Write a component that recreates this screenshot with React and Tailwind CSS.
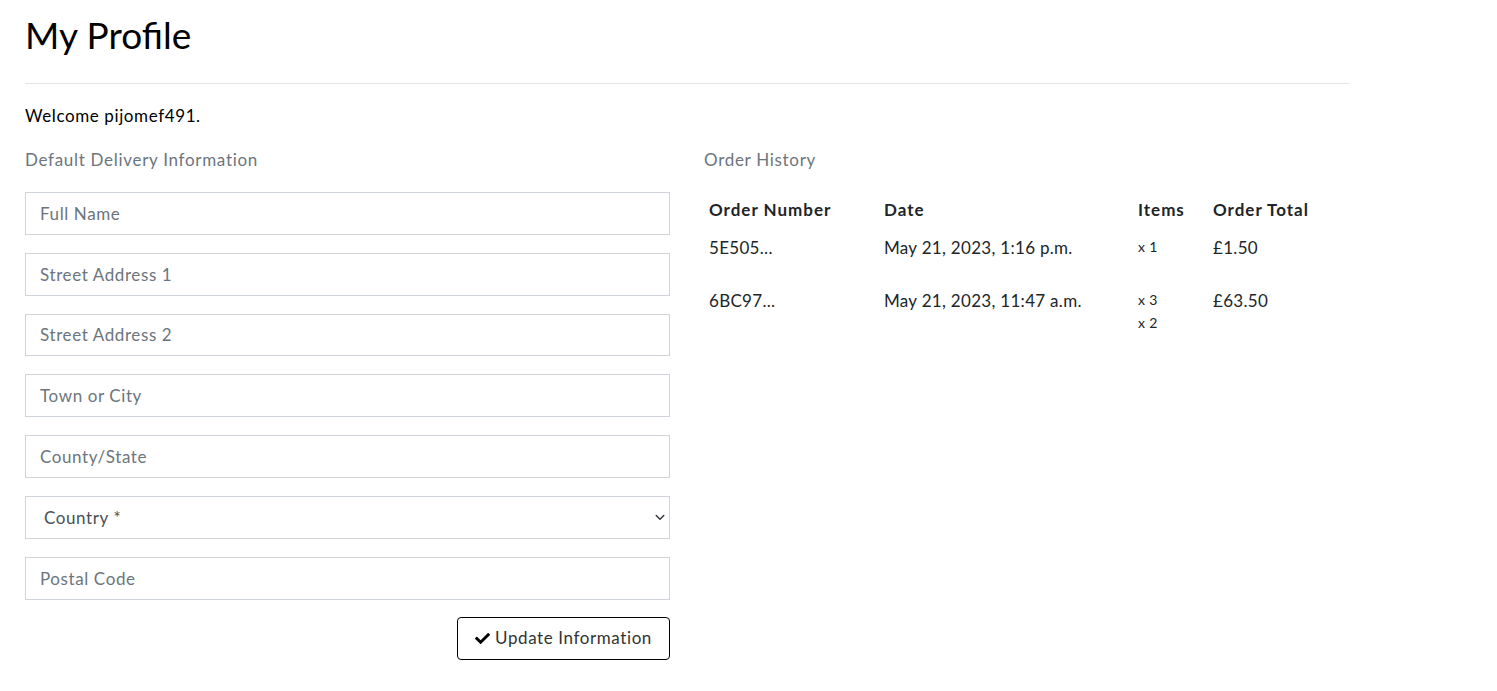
import React from "react";
import { FaCheck } from "react-icons/fa";

const fields = ["Full Name", "Street Address 1", "Street Address 2", "Town or City", "County/State"];

const orders = [
  { number: "5E505...", date: "May 21, 2023, 1:16 p.m.", items: ["x 1"], total: "£1.50" },
  { number: "6BC97...", date: "May 21, 2023, 11:47 a.m.", items: ["x 3", "x 2"], total: "£63.50" },
];

export default function App() {
  return (
    <div className="min-h-screen bg-white text-[#212529] font-['Lato','Noto_Sans',sans-serif]">
      <div className="ml-[25px] w-[1324px] pt-[13px]">
        <h1 className="text-[37px] leading-[44px] text-black">My Profile</h1>
        <hr className="mt-[26px] border-0 border-t border-[#e5e5e5]" />
        <p className="mt-[20px] text-[17px] leading-[24px] tracking-[0.6px] text-black">Welcome pijomef491.</p>

        <div className="mt-[20px] flex gap-[34px]">
          <div className="w-[645px]">
            <p className="text-[17px] leading-[24px] tracking-[0.7px] text-[#6c757d]">Default Delivery Information</p>
            <form className="mt-[20px] flex flex-col gap-[18px]">
              {fields.map((f) => (
                <input
                  key={f}
                  type="text"
                  placeholder={f}
                  className="h-[42.8px] w-full border border-[#ced4da] px-[14px] text-[17px] tracking-[0.6px] text-[#495057] placeholder:text-[#6c757d] outline-none"
                />
              ))}
              <div className="relative">
                <select className="h-[42.8px] w-full appearance-none border border-[#ced4da] bg-white pl-[18px] text-[17px] tracking-[0.6px] text-[#495057] outline-none">
                  <option>Country *</option>
                </select>
                <svg className="pointer-events-none absolute right-[4px] top-[15px] h-[12px] w-[12px]" viewBox="0 0 16 16">
                  <path d="M3 6l5 5 5-5" fill="none" stroke="#343a40" strokeWidth="2" strokeLinecap="round" strokeLinejoin="round" />
                </svg>
              </div>
              <input
                type="text"
                placeholder="Postal Code"
                className="h-[42.8px] w-full border border-[#ced4da] px-[14px] text-[17px] tracking-[0.6px] text-[#495057] placeholder:text-[#6c757d] outline-none"
              />
              <div className="flex justify-end">
                <button type="button" className="-mt-[1px] flex h-[43px] w-[213px] items-center justify-center gap-[5px] rounded-[4px] border border-black text-[17px] tracking-[0.6px] text-[#333]">
                  <FaCheck className="h-[15px] w-[15px] text-black" />
                  Update Information
                </button>
              </div>
            </form>
          </div>

          <div className="w-[645px]">
            <p className="text-[17px] leading-[24px] tracking-[0.7px] text-[#6c757d]">Order History</p>
            <div className="mt-[19px] grid grid-cols-[175px_254px_75px_1fr] text-[17px] leading-[24px] tracking-[0.3px]">
              <div className="px-[5px] py-[7px] font-bold tracking-[1px]">Order Number</div>
              <div className="px-[5px] py-[7px] font-bold tracking-[1px]">Date</div>
              <div className="px-[5px] py-[7px] font-bold tracking-[1px]">Items</div>
              <div className="px-[5px] py-[7px] font-bold tracking-[1px]">Order Total</div>
              {orders.map((o) => (
                <React.Fragment key={o.number}>
                  <div className="px-[5px] py-[7px]">{o.number}</div>
                  <div className="px-[5px] py-[7px]">{o.date}</div>
                  <div className="px-[5px] py-[7px]">
                    <ul className="-mt-[1px] mb-[17px] text-[14px] leading-[23px]">
                      {o.items.map((it, i) => (
                        <li key={i}>{it}</li>
                      ))}
                    </ul>
                  </div>
                  <div className="px-[5px] py-[7px]">{o.total}</div>
                </React.Fragment>
              ))}
            </div>
          </div>
        </div>
      </div>
    </div>
  );
}
